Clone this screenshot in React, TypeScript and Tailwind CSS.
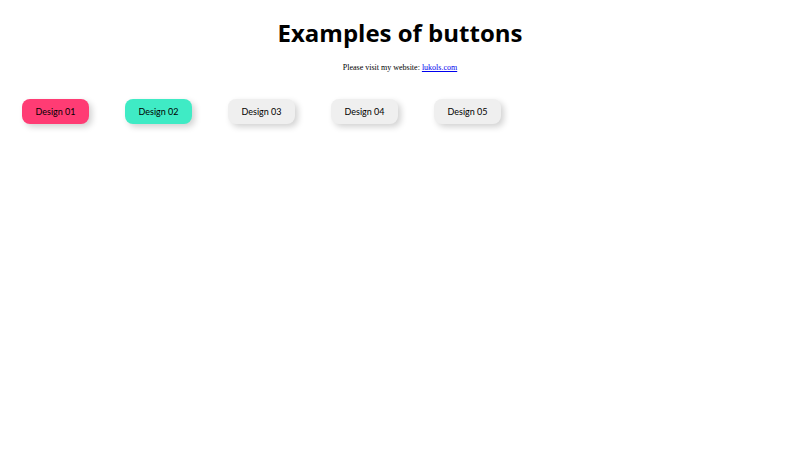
const buttons = [
  { label: 'Design 01', cls: 'bg-[#ff3c74] shadow-[3px_3px_6px_rgba(0,0,0,0.18)]' },
  { label: 'Design 02', cls: 'bg-[#3febc5] shadow-[3px_3px_6px_rgba(0,0,0,0.18)]' },
  { label: 'Design 03', cls: 'bg-[#efefef] shadow-[3px_3px_6px_rgba(0,0,0,0.18)]' },
  { label: 'Design 04', cls: 'bg-[#efefef] shadow-[3px_3px_6px_rgba(0,0,0,0.18)]' },
  { label: 'Design 05', cls: 'bg-[#efefef] shadow-[3px_3px_6px_rgba(0,0,0,0.18)]' },
]

export default function App() {
  return (
    <div className="w-[800px] h-[450px] bg-white overflow-hidden">
      <h1 className="pt-[16px] text-center text-[24px] leading-[34px] font-bold text-black font-['Open_Sans',sans-serif]">
        Examples of buttons
      </h1>
      <p className="mt-[13px] text-center text-[8px] leading-[10px] text-black font-['Liberation_Serif',serif]">
        Please visit my website: <a href="#" className="text-[#0000ee] underline">lukols.com</a>
      </p>
      <div className="mt-[26px] pl-[22px] flex gap-[36px]">
        {buttons.map(b => (
          <button
            key={b.label}
            className={`w-[67px] h-[25px] rounded-[8px] text-[9px] text-black font-['Lato',sans-serif] ${b.cls}`}
          >
            {b.label}
          </button>
        ))}
      </div>
    </div>
  )
}
